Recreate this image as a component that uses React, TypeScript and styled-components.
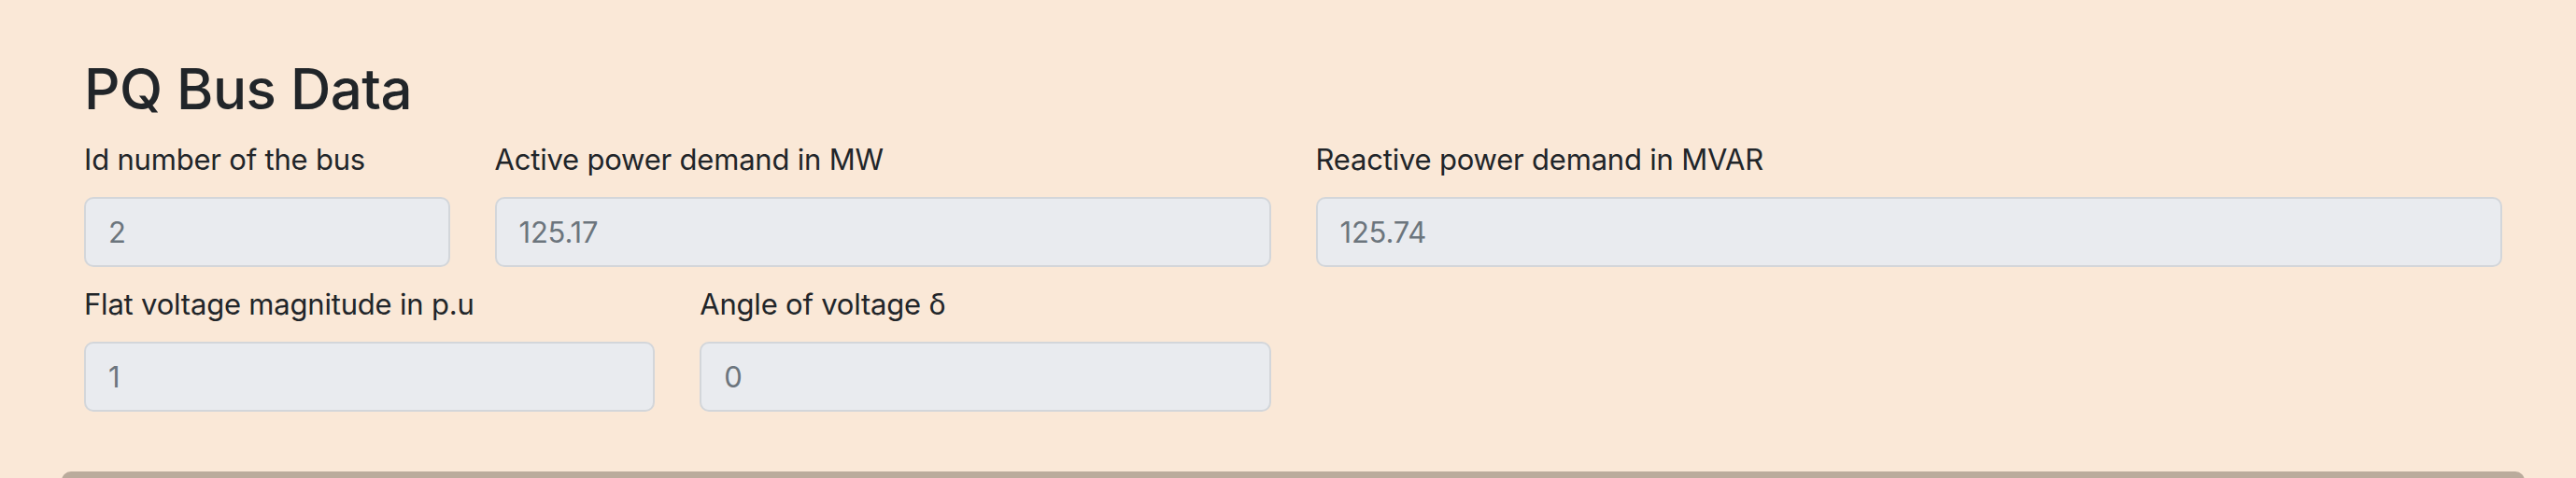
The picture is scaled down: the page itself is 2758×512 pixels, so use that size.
import React from "react";
import styled, { createGlobalStyle } from "styled-components";

const GlobalStyle = createGlobalStyle`
  html, body {
    margin: 0;
    padding: 0;
    background: #fae8d7;
  }
  body {
    font-family: Inter, "Noto Sans", "Liberation Sans", sans-serif;
    color: #212529;
    overflow: hidden;
  }
`;

const Page = styled.div`
  width: 2758px;
  height: 512px;
  background: #fae8d7;
  box-sizing: border-box;
  padding-top: 59px;
  overflow: hidden;
`;

const Container = styled.div`
  margin-left: 66px;
  width: 2637px;
`;

const Section = styled.section`
  padding: 0 24px;
`;

const Title = styled.h2`
  margin: 0 0 16px;
  font-size: 60px;
  font-weight: 500;
  line-height: 72px;
  letter-spacing: -0.5px;
  color: #212529;
`;

const Grid = styled.div`
  display: grid;
  grid-template-columns: repeat(12, minmax(0, 1fr));
  column-gap: 48px;
  row-gap: 16px;
`;

const Field = styled.div<{ $span: number }>`
  grid-column: span ${(p) => p.$span};
  display: flex;
  flex-direction: column;
`;

const Label = styled.label`
  font-size: 31px;
  line-height: 48px;
  margin-bottom: 16px;
  color: #212529;
  letter-spacing: -0.2px;
  white-space: nowrap;
`;

const Input = styled.input`
  box-sizing: border-box;
  height: 75px;
  width: 100%;
  padding: 12px 24px;
  font-family: inherit;
  font-size: 31px;
  line-height: 48px;
  color: #6c757d;
  background: #e9ebef;
  border: 2px solid #d3d6da;
  border-radius: 10px;
  outline: none;
  letter-spacing: -0.2px;
`;

const BottomCard = styled.div`
  margin-top: 64px;
  height: 40px;
  background: #baab9c;
  border-radius: 10px 10px 0 0;
`;

const fields = [
  { label: "Id number of the bus", value: "2", span: 2 },
  { label: "Active power demand in MW", value: "125.17", span: 4 },
  { label: "Reactive power demand in MVAR", value: "125.74", span: 6 },
  { label: "Flat voltage magnitude in p.u", value: "1", span: 3 },
  { label: "Angle of voltage δ", value: "0", span: 3 },
];

export default function App() {
  return (
    <Page>
      <GlobalStyle />
      <Container>
        <Section>
          <Title>PQ Bus Data</Title>
          <Grid>
            {fields.map((f) => (
              <Field key={f.label} $span={f.span}>
                <Label>{f.label}</Label>
                <Input readOnly disabled value={f.value} />
              </Field>
            ))}
          </Grid>
        </Section>
        <BottomCard />
      </Container>
    </Page>
  );
}
